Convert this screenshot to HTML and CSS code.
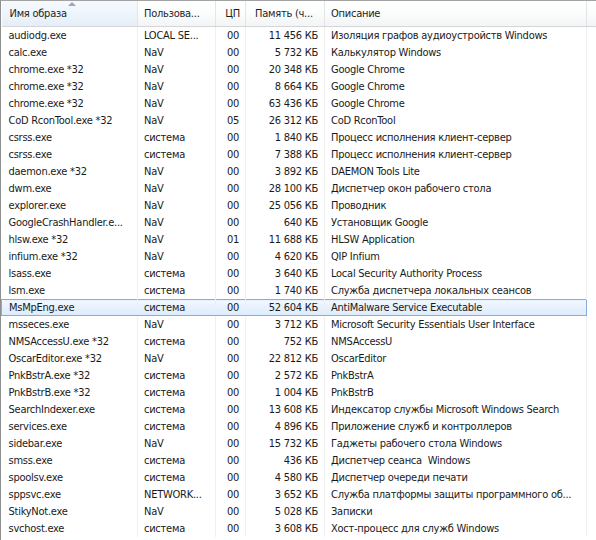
FILE: index.html
```html
<!DOCTYPE html>
<html lang="ru">
<head>
  <meta charset="UTF-8">
  <title>Процессы</title>
  <link rel="stylesheet" href="styles.css">
</head>
<body>
  <div class="list">
    <table class="procs">
      <colgroup>
        <col class="c-name"><col class="c-user"><col class="c-cpu"><col class="c-mem"><col class="c-desc"><col class="c-pad">
      </colgroup>
      <thead>
        <tr>
          <th class="sorted"><span class="arrow"></span>Имя образа</th>
          <th>Пользова...</th>
          <th class="num">ЦП</th>
          <th class="mem-h">Память (ч...</th>
          <th>Описание</th>
          <th></th>
        </tr>
      </thead>
      <tbody id="rows"></tbody>
    </table>
  </div>

  <script>
    const procs = [
      ["audiodg.exe", "LOCAL SE...", "00", "11 456", "Изоляция графов аудиоустройств Windows"],
      ["calc.exe", "NaV", "00", "5 732", "Калькулятор Windows"],
      ["chrome.exe *32", "NaV", "00", "20 348", "Google Chrome"],
      ["chrome.exe *32", "NaV", "00", "8 664", "Google Chrome"],
      ["chrome.exe *32", "NaV", "00", "63 436", "Google Chrome"],
      ["CoD RconTool.exe *32", "NaV", "05", "26 312", "CoD RconTool"],
      ["csrss.exe", "система", "00", "1 840", "Процесс исполнения клиент-сервер"],
      ["csrss.exe", "система", "00", "7 388", "Процесс исполнения клиент-сервер"],
      ["daemon.exe *32", "NaV", "00", "3 892", "DAEMON Tools Lite"],
      ["dwm.exe", "NaV", "00", "28 100", "Диспетчер окон рабочего стола"],
      ["explorer.exe", "NaV", "00", "25 056", "Проводник"],
      ["GoogleCrashHandler.e...", "NaV", "00", "640", "Установщик Google"],
      ["hlsw.exe *32", "NaV", "01", "11 688", "HLSW Application"],
      ["infium.exe *32", "NaV", "00", "4 620", "QIP Infium"],
      ["lsass.exe", "система", "00", "3 640", "Local Security Authority Process"],
      ["lsm.exe", "система", "00", "1 740", "Служба диспетчера локальных сеансов"],
      ["MsMpEng.exe", "система", "00", "52 604", "AntiMalware Service Executable"],
      ["msseces.exe", "NaV", "00", "3 712", "Microsoft Security Essentials User Interface"],
      ["NMSAccessU.exe *32", "система", "00", "752", "NMSAccessU"],
      ["OscarEditor.exe *32", "NaV", "00", "22 812", "OscarEditor"],
      ["PnkBstrA.exe *32", "система", "00", "2 572", "PnkBstrA"],
      ["PnkBstrB.exe *32", "система", "00", "1 004", "PnkBstrB"],
      ["SearchIndexer.exe", "система", "00", "13 608", "Индексатор службы Microsoft Windows Search"],
      ["services.exe", "система", "00", "4 896", "Приложение служб и контроллеров"],
      ["sidebar.exe", "NaV", "00", "15 732", "Гаджеты рабочего стола Windows"],
      ["smss.exe", "система", "00", "436", "Диспетчер сеанса  Windows"],
      ["spoolsv.exe", "система", "00", "4 580", "Диспетчер очереди печати"],
      ["sppsvc.exe", "NETWORK...", "00", "3 652", "Служба платформы защиты программного об..."],
      ["StikyNot.exe", "NaV", "00", "5 028", "Записки"],
      ["svchost.exe", "система", "00", "3 608", "Хост-процесс для служб Windows"]
    ];

    const tbody = document.getElementById("rows");
    procs.forEach(p => {
      const tr = document.createElement("tr");
      if (p[0] === "MsMpEng.exe") tr.className = "selected";
      tr.innerHTML =
        `<td>${p[0]}</td><td>${p[1]}</td><td class="num">${p[2]}</td>` +
        `<td class="num">${p[3]} КБ</td><td>${p[4]}</td><td></td>`;
      tbody.appendChild(tr);
    });
  </script>
</body>
</html>
```

FILE: styles.css
```css
body {
  margin: 0;
  background: #fff;
  color: #1a1a1a;
  font-family: "DejaVu Sans Condensed", "DejaVu Sans", sans-serif;
  font-stretch: condensed;
  font-size: 11px;
  letter-spacing: -0.25px;
  overflow: hidden;
}
.list {
  border-top: 1px solid #a3a3a3;
  border-left: 1px solid #8d8f91;
  height: 560px;
  overflow: hidden;
}
.procs {
  table-layout: fixed;
  border-collapse: collapse;
  width: 595px;
}
.c-name { width: 136px; }
.c-user { width: 78px; }
.c-cpu { width: 30px; }
.c-mem { width: 79px; }
.c-desc { width: 262px; }
.c-pad { width: 10px; }

th {
  height: 25px;
  padding: 0 6px;
  font-weight: normal;
  text-align: left;
  white-space: pre;
  overflow: hidden;
  color: #1e1e1e;
  background: linear-gradient(#ffffff, #fbfcfc 45%, #f3f4f6);
  border-right: 1px solid #e3e5e8;
  border-bottom: 1px solid #d5d5d5;
  position: relative;
}
th.sorted {
  padding-left: 8px;
  background: linear-gradient(#f6fafe, #eef5fc 45%, #e5eef8);
}
th.num {
  text-align: right;
  padding-right: 5px;
}
th.mem-h {
  padding-left: 9px;
}
.arrow {
  position: absolute;
  top: 1px;
  left: 66px;
  width: 0;
  height: 0;
  border-left: 4px solid transparent;
  border-right: 4px solid transparent;
  border-bottom: 4px solid #9aa7b8;
}

td {
  height: 17px;
  padding: 0 6px;
  white-space: pre;
  overflow: hidden;
  border-right: 1px solid #efefef;
  line-height: 17px;
}
td:first-child {
  padding-left: 7px;
}
td.num {
  text-align: right;
  padding-right: 6px;
}
tr.selected td {
  background: linear-gradient(#f1f7fe, #dcebfc);
  border-top: 1px solid #84acdd;
  border-bottom: 1px solid #84acdd;
  height: 15px;
  line-height: 15px;
}
tr.selected td:first-child {
  border-left: 1px solid #84acdd;
  border-radius: 3px 0 0 3px;
}
tr.selected td:nth-child(5) {
  border-right: 1px solid #84acdd;
  border-radius: 0 3px 3px 0;
}
tr.selected td:last-child {
  background: #fff;
  border-top: none;
  border-bottom: none;
}
```
